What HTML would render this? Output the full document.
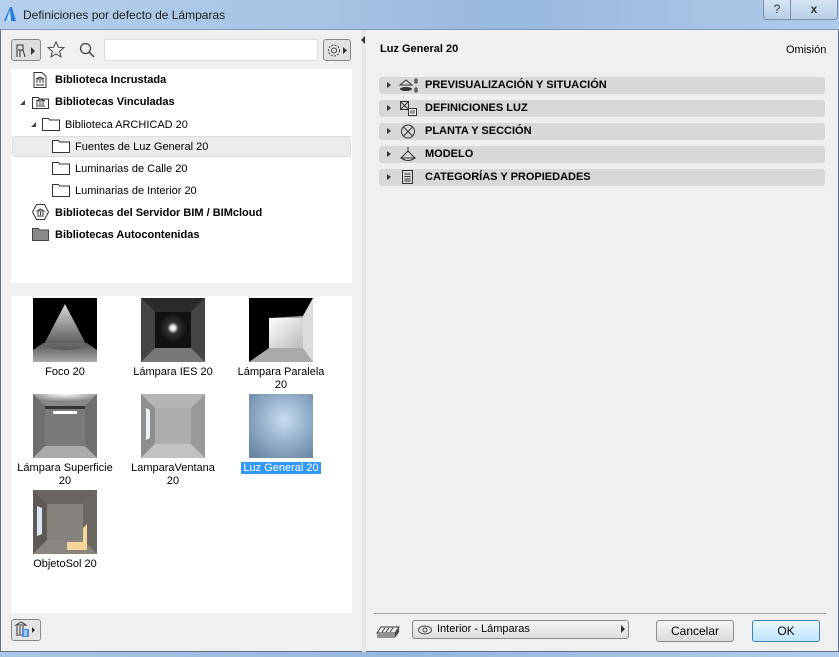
<!DOCTYPE html>
<html><head><meta charset="utf-8"><style>
*{margin:0;padding:0;box-sizing:border-box}
body{width:839px;height:657px;overflow:hidden;font-family:"Liberation Sans",sans-serif;font-size:11px;color:#000;background:#f0f0f0;position:relative}
.abs{position:absolute}
.title{left:0;top:0;width:839px;height:30px;background:linear-gradient(90deg,#b5cfec,#a6c3e3 40%,#98b8dd 60%,#afcbea);border-bottom:1px solid #7e9ab8}
.body{left:0;top:29px;width:839px;height:623px;background:#f0f0f0;border-left:1px solid #5e6f86;border-right:1px solid #5e6f86;border-bottom:1px solid #5e6f86;border-top:1px solid #7e9ab8}
.bot{left:0;top:652px;width:839px;height:5px;background:linear-gradient(90deg,#a9c6e6,#97b7dc 50%,#b1cdeb)}
.white{background:#fff}
.tree div{position:absolute;white-space:nowrap;font-size:11px}
.b{font-weight:bold}
.bar{left:379px;width:446px;height:17px;background:#d8d8d8;border-radius:3px;font-weight:bold;font-size:11px;line-height:17px}
.bar .tri{position:absolute;left:8px;top:5px;width:0;height:0;border-left:4px solid #333;border-top:3.5px solid transparent;border-bottom:3.5px solid transparent}
.bar span{position:absolute;left:46px}
.thumb{position:absolute;width:64px;height:64px;overflow:hidden}
.cap{position:absolute;width:108px;text-align:center;font-size:11px;line-height:13px}
.btn{position:absolute;border:1px solid #8c8c8c;border-radius:3px;background:linear-gradient(#f5f5f5,#dcdcdc);text-align:center;font-size:12px;line-height:20px}
</style></head><body>
<div class="abs title"></div>
<svg class="abs" style="left:3px;top:6px" width="14" height="16"><path d="M1 15 L7 1 L9 1 L13 15 Z" fill="#2a7fd6"/><path d="M3 15 L7 4 L8 15Z" fill="#bfe0ff"/></svg>
<div class="abs" style="left:23px;top:8px;font-size:12px;color:#1e1e1e">Definiciones por defecto de Lámparas</div>
<div class="abs" style="left:763px;top:0;width:28px;height:20px;border:1px solid #7a8ea8;border-top:none;border-radius:0 0 0 4px;background:linear-gradient(#d5e3f3,#b9cfe8);text-align:center;font-size:12px;line-height:18px;color:#333">?</div>
<div class="abs" style="left:791px;top:0;width:47px;height:20px;border:1px solid #7a8ea8;border-top:none;border-left:none;border-radius:0 0 4px 0;background:linear-gradient(#d5e3f3,#b9cfe8);text-align:center;font-size:12px;font-weight:bold;line-height:18px;color:#333">x</div>
<div class="abs body"></div>
<div class="abs bot"></div>

<!-- toolbar -->
<div class="abs" style="left:11px;top:39px;width:30px;height:22px;border:1px solid #888;border-radius:3px;background:#dedede"></div>
<svg class="abs" style="left:14px;top:42px" width="26" height="17"><path d="M3 15V3h6v5H4 M9 8l2 7 M6 8v7" stroke="#333" fill="none"/><path d="M17 5l4 4-4 4z" fill="#333"/></svg>
<svg class="abs" style="left:46px;top:40px" width="20" height="20"><path d="M10 2l2.3 5.2 5.6.5-4.3 3.7 1.3 5.5L10 14l-4.9 2.9 1.3-5.5L2.1 7.7l5.6-.5z" fill="none" stroke="#444"/></svg>
<svg class="abs" style="left:78px;top:41px" width="18" height="18"><circle cx="7.5" cy="7.5" r="5" fill="none" stroke="#444" stroke-width="1.3"/><path d="M11 11l5 5" stroke="#444" stroke-width="1.5"/></svg>
<div class="abs white" style="left:104px;top:39px;width:214px;height:22px;border:1px solid #ddd;border-radius:2px"></div>
<div class="abs" style="left:323px;top:39px;width:28px;height:22px;border:1px solid #888;border-radius:3px;background:#e2e2e2"></div>
<svg class="abs" style="left:325px;top:42px" width="26" height="17"><circle cx="9" cy="8.5" r="5.5" fill="none" stroke="#444" stroke-dasharray="2 1.3"/><circle cx="9" cy="8.5" r="2.5" fill="none" stroke="#444"/><path d="M18 5l4 3.5-4 3.5z" fill="#333"/></svg>

<!-- tree -->
<div class="abs white tree" style="left:11px;top:69px;width:341px;height:215px">
<svg class="abs" style="left:22px;top:3px" width="14" height="16"><path d="M1 .5h8l4 4v11H1z" fill="#fff" stroke="#333"/><path d="M3 13h8M4 11V8M7 11V8M10 11V8M3 7l4-2 4 2z" stroke="#333" fill="none"/></svg>
<div class="b" style="left:44px;top:5px">Biblioteca Incrustada</div>
<div style="left:9px;top:31px;width:0;height:0;border-right:5px solid #444;border-top:5px solid transparent"></div>
<svg class="abs" style="left:21px;top:26px" width="17" height="14"><path d="M.5 2.5h6l1 1.5h9v9.5H.5z" fill="#fff" stroke="#333"/><path d="M4 11h9M5 10V7M8 10V7M11 10V7M4 6l4.5-2 4.5 2z" stroke="#333" fill="none"/></svg>
<div class="b" style="left:44px;top:27px">Bibliotecas Vinculadas</div>
<div style="left:20px;top:53px;width:0;height:0;border-right:5px solid #444;border-top:5px solid transparent"></div>
<svg class="abs" style="left:31px;top:48px" width="18" height="14"><path d="M.5 1.5h6l1 1.5h10v10.5H.5z" fill="#fff" stroke="#333"/></svg>
<div style="left:54px;top:50px">Biblioteca ARCHICAD 20</div>
<div style="left:1px;top:67px;width:339px;height:21px;background:#ececec;border:1px solid #dcdcdc;border-radius:3px"></div>
<svg class="abs" style="left:41px;top:70px" width="18" height="14"><path d="M.5 1.5h6l1 1.5h10v10.5H.5z" fill="#fff" stroke="#333"/></svg>
<div style="left:64px;top:72px">Fuentes de Luz General 20</div>
<svg class="abs" style="left:41px;top:92px" width="18" height="14"><path d="M.5 1.5h6l1 1.5h10v10.5H.5z" fill="#fff" stroke="#333"/></svg>
<div style="left:64px;top:94px">Luminarias de Calle 20</div>
<svg class="abs" style="left:41px;top:114px" width="18" height="14"><path d="M.5 1.5h6l1 1.5h10v10.5H.5z" fill="#fff" stroke="#333"/></svg>
<div style="left:64px;top:116px">Luminarias de Interior 20</div>
<svg class="abs" style="left:21px;top:135px" width="17" height="16"><path d="M4.5.5h8l4 7.5-4 7.5h-8L.5 8z" fill="#fff" stroke="#333"/><path d="M5 12h7M6 11V8M8.5 11V8M11 11V8M5 7l3.5-2 3.5 2z" stroke="#333" fill="none"/></svg>
<div class="b" style="left:44px;top:138px">Bibliotecas del Servidor BIM / BIMcloud</div>
<svg class="abs" style="left:21px;top:158px" width="17" height="14"><path d="M.5 1.5h6l1 1.5h9v10.5H.5z" fill="#8a8a8a" stroke="#444"/></svg>
<div class="b" style="left:44px;top:160px">Bibliotecas Autocontenidas</div>
</div>

<!-- grid -->
<div class="abs white" style="left:11px;top:296px;width:341px;height:317px"></div>
<div class="abs" style="left:11px;top:283px;width:341px;height:13px;background:#f0f0f0"></div>
<svg class="thumb" style="left:33px;top:298px" width="64" height="64"><defs><linearGradient id="c" x1="0" y1="0" x2="0" y2="1"><stop offset="0" stop-color="#fff"/><stop offset="1" stop-color="#555"/></linearGradient><linearGradient id="f" x1="0" y1="0" x2="0" y2="1"><stop offset="0" stop-color="#555"/><stop offset="1" stop-color="#aaa"/></linearGradient></defs><rect width="64" height="64" fill="#000"/><path d="M0 52 L10 45 H54 L64 52 V64 H0Z" fill="url(#f)"/><path d="M32 6 L10 48 Q32 56 54 48Z" fill="url(#c)" opacity=".85"/></svg>
<svg class="thumb" style="left:141px;top:298px" width="64" height="64"><defs><radialGradient id="g"><stop offset="0" stop-color="#fff"/><stop offset=".15" stop-color="#eee"/><stop offset=".4" stop-color="#333"/><stop offset="1" stop-color="#111"/></radialGradient></defs><rect width="64" height="64" fill="#555"/><path d="M0 0H64L50 14H14Z" fill="#2a2a2a"/><path d="M0 64H64L50 50H14Z" fill="#777"/><path d="M0 0L14 14V50L0 64Z" fill="#444"/><path d="M64 0L50 14V50L64 64Z" fill="#444"/><rect x="14" y="14" width="36" height="36" fill="#111"/><circle cx="32" cy="30" r="14" fill="url(#g)"/></svg>
<svg class="thumb" style="left:249px;top:298px" width="64" height="64"><defs><linearGradient id="w" x1="0" y1="0" x2="1" y2="1"><stop offset="0" stop-color="#fff"/><stop offset="1" stop-color="#bbb"/></linearGradient></defs><rect width="64" height="64" fill="#000"/><path d="M64 0V64H0L20 50V20L54 18Z" fill="#aaa"/><path d="M54 18L64 0V64L54 50Z" fill="#ddd"/><rect x="20" y="20" width="34" height="30" fill="url(#w)"/></svg>
<svg class="thumb" style="left:33px;top:394px" width="64" height="64"><defs><radialGradient id="t" cy="0" r=".6"><stop offset="0" stop-color="#fff"/><stop offset="1" stop-color="#888"/></radialGradient></defs><rect width="64" height="64" fill="#888"/><path d="M0 0H64L52 12H12Z" fill="url(#t)"/><path d="M0 0L12 12V52L0 64Z" fill="#6f6f6f"/><path d="M64 0L52 12V52L64 64Z" fill="#6f6f6f"/><path d="M0 64H64L52 52H12Z" fill="#aaa"/><rect x="12" y="12" width="40" height="40" fill="#7a7a7a"/><rect x="12" y="12" width="40" height="3" fill="#333"/><rect x="20" y="17" width="24" height="3" fill="#fff"/></svg>
<svg class="thumb" style="left:141px;top:394px" width="64" height="64"><rect width="64" height="64" fill="#aaa"/><path d="M0 0H64L50 14H14Z" fill="#b5b5b5"/><path d="M0 0L14 14V50L0 64Z" fill="#8f8f8f"/><path d="M64 0L50 14V50L64 64Z" fill="#999"/><path d="M0 64H64L50 50H14Z" fill="#c2c2c2"/><rect x="14" y="14" width="36" height="36" fill="#adadad"/><path d="M5 14L9 16V44L5 46Z" fill="#eef3f8"/></svg>
<div class="thumb" style="left:249px;top:394px;background:radial-gradient(circle at 55% 40%,#c9def2,#9bb5cf 40%,#6a86a3 90%)"></div>
<svg class="thumb" style="left:33px;top:490px" width="64" height="64"><rect width="64" height="64" fill="#7f7a75"/><path d="M0 0H64L50 14H14Z" fill="#6a6560"/><path d="M0 0L14 14V50L0 64Z" fill="#5e5955"/><path d="M64 0L50 14V50L64 64Z" fill="#6b6763"/><path d="M0 64H64L50 50H14Z" fill="#8a8580"/><rect x="14" y="14" width="36" height="36" fill="#86827e"/><path d="M4 16L9 18V44L4 46Z" fill="#dce8f5"/><path d="M34 52H50V38L54 34V60H34Z" fill="#f6d69a"/></svg>
<div class="cap" style="left:11px;top:366px">Foco 20</div>
<div class="cap" style="left:119px;top:366px">Lámpara IES 20</div>
<div class="cap" style="left:227px;top:366px">Lámpara Paralela<br>20</div>
<div class="cap" style="left:11px;top:462px">Lámpara Superficie<br>20</div>
<div class="cap" style="left:119px;top:462px">LamparaVentana<br>20</div>
<div class="cap" style="left:227px;top:462px"><span style="background:#3399ff;color:#fff;padding:0 2px">Luz General 20</span></div>
<div class="cap" style="left:11px;top:558px">ObjetoSol 20</div>

<div class="abs" style="left:11px;top:619px;width:30px;height:22px;border:1px solid #888;border-radius:3px;background:#e4e4e4"></div>
<svg class="abs" style="left:14px;top:621px" width="26" height="18"><path d="M2 4l5-3 5 3zM3 5v8M6 5v8M9 5v8M2 14h9" stroke="#333" fill="none"/><rect x="8" y="8" width="7" height="8" fill="#4a8fe0"/><path d="M10 10h3M10 12h3M10 14h3" stroke="#fff"/><path d="M18 6l3 3-3 3z" fill="#333"/></svg>

<!-- divider -->
<div class="abs" style="left:362px;top:30px;width:4px;height:622px;background:#e6e6e6"></div>
<div class="abs" style="left:361px;top:36px;width:0;height:0;border-right:4px solid #333;border-top:4px solid transparent;border-bottom:4px solid transparent"></div>

<!-- right -->
<div class="abs b" style="left:380px;top:43px">Luz General 20</div>
<div class="abs" style="left:786px;top:44px">Omisión</div>
<div class="abs bar" style="top:77px"><div class="tri"></div><svg class="abs" style="left:19px;top:0" width="22" height="17"><path d="M2 8l6-5 6 5z" fill="none" stroke="#333"/><ellipse cx="8" cy="12" rx="6" ry="2" fill="#333"/><path d="M18 1v6M16 3h4M16 5h4M18 10v6M16 12h4M16 14h4" stroke="#333"/></svg><span>PREVISUALIZACIÓN Y SITUACIÓN</span></div>
<div class="abs bar" style="top:100px"><div class="tri"></div><svg class="abs" style="left:19px;top:0" width="22" height="17"><rect x="2.5" y="1.5" width="8" height="8" fill="none" stroke="#333"/><path d="M3 2l7 7M10 2l-7 7" stroke="#333"/><rect x="10.5" y="8.5" width="8" height="7" fill="#fff" stroke="#333"/><path d="M12 11h5M12 13h5" stroke="#333"/></svg><span>DEFINICIONES LUZ</span></div>
<div class="abs bar" style="top:123px"><div class="tri"></div><svg class="abs" style="left:19px;top:0" width="22" height="17"><circle cx="10" cy="8.5" r="6.5" fill="none" stroke="#333"/><path d="M5.5 4l9 9M14.5 4l-9 9" stroke="#333"/></svg><span>PLANTA Y SECCIÓN</span></div>
<div class="abs bar" style="top:146px"><div class="tri"></div><svg class="abs" style="left:19px;top:0" width="22" height="17"><path d="M10 1v4M3 12l7-7 7 7zM3 12q7 5 14 0" fill="none" stroke="#333"/></svg><span>MODELO</span></div>
<div class="abs bar" style="top:169px"><div class="tri"></div><svg class="abs" style="left:19px;top:0" width="22" height="17"><rect x="4.5" y="1.5" width="10" height="13" fill="none" stroke="#333"/><path d="M6.5 5h6M6.5 7.5h6M6.5 10h6M6.5 12h6" stroke="#333"/></svg><span>CATEGORÍAS Y PROPIEDADES</span></div>

<div class="abs" style="left:374px;top:613px;width:452px;height:1px;background:#a8a8a8"></div>
<svg class="abs" style="left:376px;top:622px" width="26" height="16"><path d="M1 11l4-6h18l-4 6z M1 13h18l4-6 M1 15h18l4-6" fill="none" stroke="#333"/><path d="M9 6l-3 4M13 6l-3 4M17 6l-3 4" stroke="#333"/></svg>
<div class="abs" style="left:412px;top:620px;width:217px;height:19px;border:1px solid #888;border-radius:3px;background:linear-gradient(#f4f4f4,#dedede);font-size:11px;line-height:17px;padding-left:24px">Interior - Lámparas</div>
<svg class="abs" style="left:417px;top:624px" width="16" height="12"><ellipse cx="8" cy="6" rx="6.5" ry="4" fill="none" stroke="#444"/><circle cx="8" cy="6" r="2" fill="none" stroke="#444"/></svg>
<div class="abs" style="left:621px;top:625px;width:0;height:0;border-left:4px solid #333;border-top:4px solid transparent;border-bottom:4px solid transparent"></div>
<div class="btn" style="left:656px;top:620px;width:78px;height:22px">Cancelar</div>
<div class="btn" style="left:752px;top:620px;width:68px;height:22px;border-color:#3c7fb1;background:linear-gradient(#eaf6fd,#bee6fd)">OK</div>
</body></html>
